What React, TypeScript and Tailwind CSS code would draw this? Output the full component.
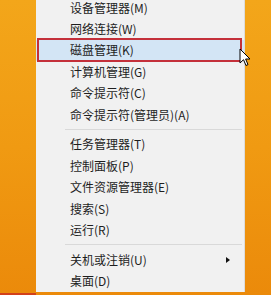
import React from "react";

type Item = { label: string; arrow?: boolean; active?: boolean } | "sep";

const items: Item[] = [
	{ label: "设备管理器(M)" },
	{ label: "网络连接(W)" },
	{ label: "磁盘管理(K)", active: true },
	{ label: "计算机管理(G)" },
	{ label: "命令提示符(C)" },
	{ label: "命令提示符(管理员)(A)" },
	"sep",
	{ label: "任务管理器(T)" },
	{ label: "控制面板(P)" },
	{ label: "文件资源管理器(E)" },
	{ label: "搜索(S)" },
	{ label: "运行(R)" },
	"sep",
	{ label: "关机或注销(U)", arrow: true },
	{ label: "桌面(D)" },
];

export default function App() {
	return (
		<div
			className="relative flex w-[271px] h-[295px] overflow-hidden bg-gradient-to-b from-[#f3a61a] via-[#f09a12] to-[#eb8a0a]"
			style={{ fontFamily: '"Noto Sans CJK SC", "Noto Sans", sans-serif' }}
		>
			<div className="w-[36px] h-full flex flex-col justify-end">
				<div className="h-[2px] bg-[#d2401a]" />
			</div>
			<div className="w-[209px] h-full bg-[#f1f1f1] border-r border-[#dcdcdc] flex flex-col -mt-[3px] pt-0">
				{items.map((it, i) =>
					it === "sep" ? (
						<div key={i} className="h-[8.5px] flex items-center pl-[29px] pr-[2px]">
							<div className="h-px w-full bg-[#d9d9d9]" />
						</div>
					) : (
						<div
							key={i}
							className={
								"relative h-[21.6px] flex items-center pl-[34px] pr-[14px] text-[12px] text-[#1e1e1e] " +
								(it.active ? "bg-[#d3e5f5]" : "")
							}
						>
							<span className="flex-1 leading-none">{it.label}</span>
							{it.arrow && (
								<span className="w-0 h-0 border-y-[3.5px] border-y-transparent border-l-[4px] border-l-[#111]" />
							)}
							{it.active && (
								<div className="absolute left-[1px] right-[2px] -top-[2px] -bottom-[1px] border-2 border-[#c4303a]" />
							)}
						</div>
					)
				)}
			</div>
			<svg
				className="absolute left-[239px] top-[48px]"
				width="13"
				height="20"
				viewBox="0 0 13 20"
			>
				<path
					d="M1 1 L1 15 L4.5 11.7 L7 17.5 L9 16.6 L6.6 11 L11 11 Z"
					fill="#fff"
					stroke="#000"
					strokeWidth="1"
					strokeLinejoin="miter"
				/>
			</svg>
		</div>
	);
}
